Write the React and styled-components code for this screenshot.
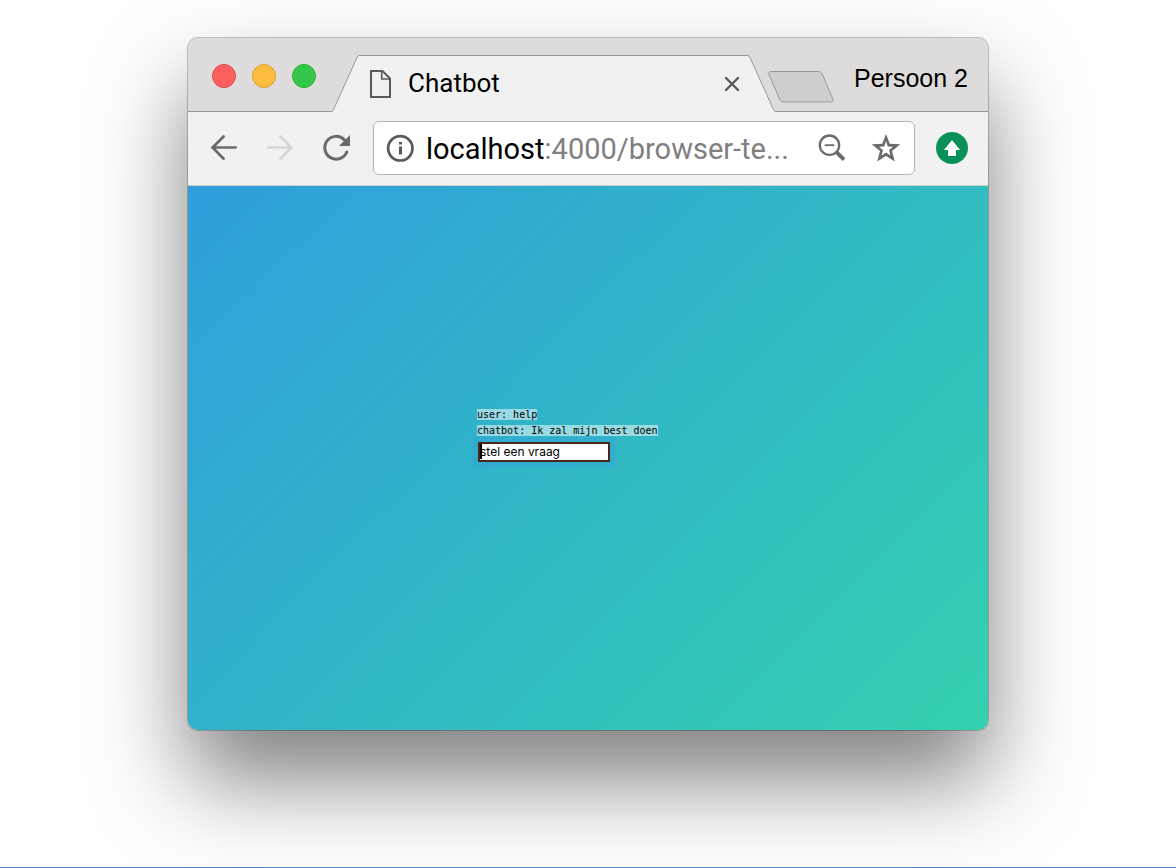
import React from "react";
import styled, { createGlobalStyle } from "styled-components";

const GlobalStyle = createGlobalStyle`
  *, *::before, *::after { box-sizing: border-box; }
  body { margin: 0; background: #fff; font-family: Inter, "Liberation Sans", sans-serif; }
  button { appearance: none; border: 0; padding: 0; background: none; font: inherit; color: inherit; }
`;

const Page = styled.div`
  min-height: 100vh;
  display: flex;
  flex-direction: column;
  align-items: center;
  padding: 38px 24px 137px;
  border-bottom: 1px solid #5885dc;
  overflow: hidden;
`;

const Window = styled.div`
  flex: 1;
  width: 100%;
  max-width: 800px;
  display: flex;
  flex-direction: column;
  border-radius: 10px;
  box-shadow: 0 0 0 1px rgba(0, 0, 0, 0.22), 0 50px 90px rgba(0, 0, 0, 0.5);
`;

const TabStrip = styled.header`
  display: flex;
  align-items: stretch;
  height: 74px;
  background: #dddcda;
  border-radius: 10px 10px 0 0;
`;

const StripSide = styled.div`
  flex: none;
  display: flex;
  align-items: center;
  border-bottom: 1px solid #999;
`;

const Lights = styled(StripSide)`
  width: 144px;
  padding: 2px 0 0 24px;
  gap: 16px;
`;

const Light = styled.button`
  width: 24px;
  height: 24px;
  border-radius: 50%;
  background: ${(p) => p.$fill};
  border: 1px solid ${(p) => p.$edge};
`;

const Tab = styled.div`
  flex: 1;
  min-width: 0;
  height: 57px;
  align-self: flex-end;
  display: flex;
`;

const TabBody = styled.div`
  flex: 1;
  min-width: 0;
  display: flex;
  align-items: center;
  padding: 0 8px 0 10px;
  background: #f1f1f1;
  border-top: 1px solid #999;
`;

const TabTitle = styled.span`
  flex: 1;
  margin-left: 17px;
  padding-bottom: 2px;
  font-family: Roboto, sans-serif;
  font-size: 26px;
  line-height: 32px;
  color: #000;
`;

const Profile = styled(StripSide)`
  width: 213px;
  justify-content: space-between;
  padding: 6px 20px 0 0;
`;

const NewTab = styled.button`
  display: flex;
  margin: 18px 0 0 -7px;
`;

const ProfileName = styled.button`
  font-family: "Liberation Sans", Arial, sans-serif;
  font-size: 25px;
  line-height: 32px;
`;

const Toolbar = styled.nav`
  display: flex;
  align-items: center;
  height: 74px;
  padding: 0 20px 2px 22px;
  background: #f1f1f1;
  border-bottom: 1px solid #cfcfcf;
`;

const NavButtons = styled.div`
  display: flex;
  gap: 28px;
  margin-right: 23px;
`;

const IconButton = styled.button`
  display: flex;
  flex: none;
  color: ${(p) => p.$color || "#6a6a6a"};
`;

const AddressBar = styled.div`
  flex: 1;
  min-width: 0;
  height: 54px;
  display: flex;
  align-items: center;
  padding: 0 14px 0 12px;
  background: #fff;
  border: 1px solid #b5b5b5;
  border-radius: 6px;
  margin-right: 21px;
`;

const Url = styled.span`
  flex: 1;
  min-width: 0;
  overflow: hidden;
  white-space: nowrap;
  margin-left: 12px;
  padding-top: 2px;
  font-family: Roboto, sans-serif;
  font-size: 29px;
  line-height: 40px;
  color: #808080;
`;

const Host = styled.span`
  color: #000;
`;

const AddressActions = styled.div`
  display: flex;
  gap: 26px;
`;

const Viewport = styled.main`
  flex: 1;
  display: flex;
  align-items: center;
  justify-content: center;
  padding-bottom: 47px;
  background: linear-gradient(135deg, #2f9edc, #33d1af);
  border-radius: 0 0 10px 10px;
`;

const Chat = styled.form`
  width: 222px;
`;

const Message = styled.p`
  margin: 0;
  font-family: "DejaVu Sans Mono", monospace;
  font-size: 10px;
  line-height: 16px;
  white-space: nowrap;
  color: #000;
`;

const Marked = styled.mark`
  background: rgba(255, 255, 255, 0.5);
  color: inherit;
`;

const Question = styled.input`
  display: block;
  width: 132px;
  height: 20px;
  margin: 3px 0 0 1px;
  padding: 0 0 2px;
  border: 2px solid #4a2619;
  border-radius: 0;
  outline: 0;
  box-shadow: 0 0 0 5px rgba(52, 160, 222, 0.4);
  background: linear-gradient(#000, #000) 0 0 / 2px 15px no-repeat #fff;
  font-family: Inter, sans-serif;
  font-size: 12px;
  color: #000;
  &::placeholder { color: #000; opacity: 1; }
`;

const TabEdge = ({ flip }) => (
  <svg width="27" height="57" viewBox="0 0 27 57" aria-hidden="true">
    <g transform={flip ? "translate(27 0) scale(-1 1)" : undefined}>
      <path d="M0 57V56.5C1 56 1.4 55 2 53.5L25 2.5Q26 .5 27 .5V57Z" fill="#f1f1f1" />
      <path d="M0 56.5C1 56 1.4 55 2 53.5L25 2.5Q26 .5 27 .5" fill="none" stroke="#999" />
    </g>
  </svg>
);

const FileIcon = () => (
  <svg width="22" height="28" viewBox="0 0 22 28" fill="none" stroke="#5a5a5a" strokeWidth="2" aria-hidden="true">
    <path d="M2 1H13.5L21 8.5V27H2Z" />
    <path d="M12.7 1V9H20.5" strokeWidth="1.6" />
  </svg>
);

const CloseIcon = () => (
  <svg width="16" height="16" viewBox="0 0 16 16" stroke="#5a5a5a" strokeWidth="2.4" strokeLinecap="round" aria-hidden="true">
    <path d="M2 2L14 14M14 2L2 14" />
  </svg>
);

const NewTabShape = () => (
  <svg width="66" height="32" viewBox="0 0 66 32" aria-hidden="true">
    <path d="M3 .5H50Q53 .5 54.3 3L64.8 28Q66 31 63 31H16Q13 31 11.8 28.5L1.2 4Q0 .5 3 .5Z" fill="#cfcfcf" stroke="#999" />
  </svg>
);

const ArrowIcon = ({ flip }) => (
  <svg width="28" height="28" viewBox="0 0 28 28" fill="none" stroke="currentColor" strokeWidth="2.7" strokeLinecap="round" aria-hidden="true">
    <path
      transform={flip ? "translate(28 0) scale(-1 1)" : undefined}
      d="M25.6 13.5H3M13.6 2.5L2.6 13.5L13.6 24.8"
    />
  </svg>
);

const ReloadIcon = () => (
  <svg width="28" height="28" viewBox="0 0 28 28" aria-hidden="true">
    <path d="M22.2 5.6A11.4 11.4 0 1 0 24.8 18" fill="none" stroke="currentColor" strokeWidth="3" strokeLinecap="round" />
    <path d="M28 1V12H17Z" fill="currentColor" />
  </svg>
);

const InfoIcon = () => (
  <svg width="28" height="28" viewBox="0 0 28 28" aria-hidden="true">
    <circle cx="14.3" cy="14.3" r="12.2" fill="none" stroke="#5a5a5a" strokeWidth="2.7" />
    <path d="M13 8H16V10.6H13ZM13 12.6H16V20.5H13Z" fill="#5a5a5a" />
  </svg>
);

const ZoomOutIcon = () => (
  <svg width="28" height="28" viewBox="0 0 28 28" fill="none" stroke="currentColor" aria-hidden="true">
    <circle cx="11.5" cy="11.2" r="9.7" strokeWidth="2.3" />
    <path d="M6.8 11.2H16.4" strokeWidth="1.8" />
    <path d="M18.5 18.2L26 25.7" strokeWidth="3.8" />
  </svg>
);

const StarIcon = () => (
  <svg width="28" height="28" viewBox="0 0 28 28" aria-hidden="true">
    <path
      d="M14 0L17.7 9.8L28.2 10.3L20 16.9L22.8 27.6L14 21.9L5.2 27.6L8 16.9L-.2 10.3L10.3 9.8ZM14 7.2L12.2 12.4L6.9 12.7L11 16.1L9.6 21.4L14 18.5L18.4 21.4L17 16.1L21.1 12.7L15.8 12.4Z"
      fill="currentColor"
      fillRule="evenodd"
    />
  </svg>
);

const UpdateIcon = () => (
  <svg width="32" height="32" viewBox="0 0 32 32" aria-hidden="true">
    <circle cx="16" cy="16" r="16" fill="#0c9059" />
    <path d="M16 8L24 18H20V24H12V18H8Z" fill="#fff" />
  </svg>
);

const lights = [
  { name: "Sluiten", fill: "#fc605c", edge: "#e14742" },
  { name: "Minimaliseren", fill: "#fdbc40", edge: "#dc9c33" },
  { name: "Vergroten", fill: "#34c84a", edge: "#2bab37" },
];

const messages = ["user: help", "chatbot: Ik zal mijn best doen"];

export default function App() {
  return (
    <>
      <GlobalStyle />
      <Page>
        <Window>
          <TabStrip>
            <Lights>
              {lights.map((l) => (
                <Light key={l.name} type="button" aria-label={l.name} $fill={l.fill} $edge={l.edge} />
              ))}
            </Lights>
            <Tab>
              <TabEdge />
              <TabBody>
                <FileIcon />
                <TabTitle>Chatbot</TabTitle>
                <IconButton type="button" aria-label="Tabblad sluiten">
                  <CloseIcon />
                </IconButton>
              </TabBody>
              <TabEdge flip />
            </Tab>
            <Profile>
              <NewTab type="button" aria-label="Nieuw tabblad">
                <NewTabShape />
              </NewTab>
              <ProfileName type="button">Persoon 2</ProfileName>
            </Profile>
          </TabStrip>
          <Toolbar>
            <NavButtons>
              <IconButton type="button" aria-label="Vorige">
                <ArrowIcon />
              </IconButton>
              <IconButton type="button" aria-label="Volgende" $color="#d6d6d6">
                <ArrowIcon flip />
              </IconButton>
              <IconButton type="button" aria-label="Vernieuwen">
                <ReloadIcon />
              </IconButton>
            </NavButtons>
            <AddressBar>
              <IconButton type="button" aria-label="Site-informatie">
                <InfoIcon />
              </IconButton>
              <Url>
                <Host>localhost</Host>:4000/browser-te...
              </Url>
              <AddressActions>
                <IconButton type="button" aria-label="Uitzoomen">
                  <ZoomOutIcon />
                </IconButton>
                <IconButton type="button" aria-label="Bladwijzer">
                  <StarIcon />
                </IconButton>
              </AddressActions>
            </AddressBar>
            <IconButton type="button" aria-label="Bijwerken">
              <UpdateIcon />
            </IconButton>
          </Toolbar>
          <Viewport>
            <Chat onSubmit={(e) => e.preventDefault()}>
              {messages.map((m) => (
                <Message key={m}>
                  <Marked>{m}</Marked>
                </Message>
              ))}
              <Question type="text" aria-label="stel een vraag" placeholder="stel een vraag" />
            </Chat>
          </Viewport>
        </Window>
      </Page>
    </>
  );
}
